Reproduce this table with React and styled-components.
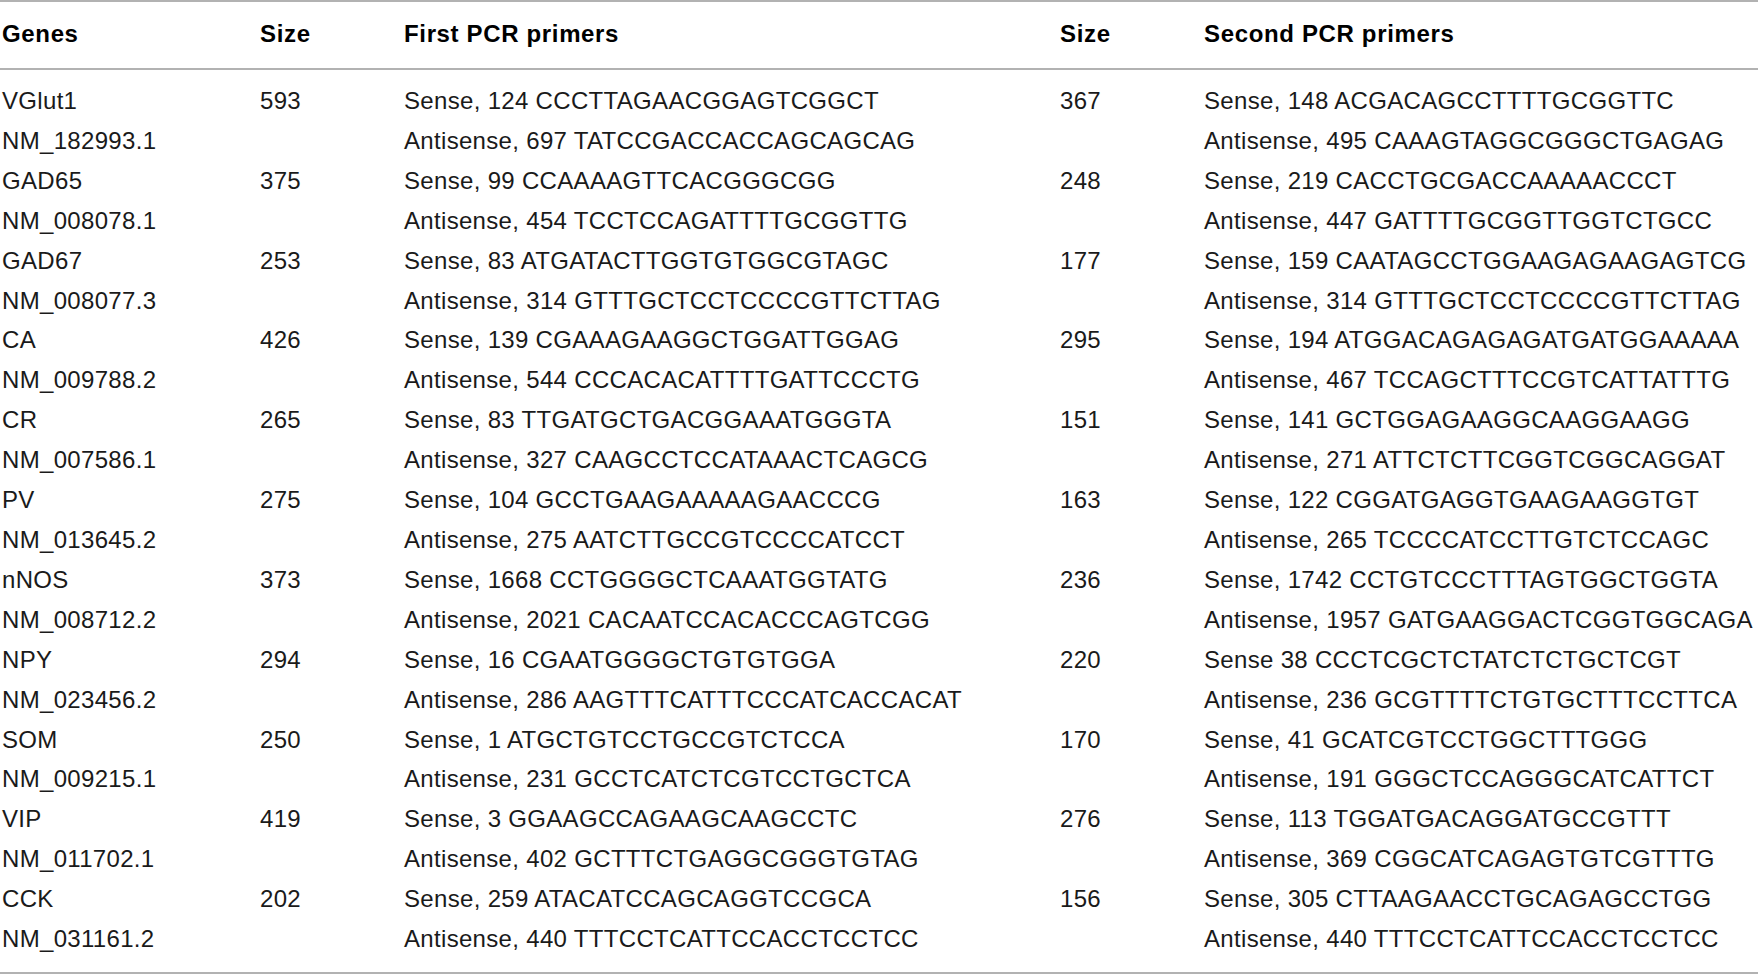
import styled, { createGlobalStyle } from "styled-components";

const GlobalStyle = createGlobalStyle`
  html, body {
    margin: 0;
    padding: 0;
    background: #ffffff;
    overflow: hidden;
  }
  body {
    font-family: "Liberation Sans", Arial, sans-serif;
  }
`;

const genes = [
  {
    name: "VGlut1", acc: "NM_182993.1", size1: "593",
    s1: "Sense, 124 CCCTTAGAACGGAGTCGGCT", a1: "Antisense, 697 TATCCGACCACCAGCAGCAG",
    size2: "367",
    s2: "Sense, 148 ACGACAGCCTTTTGCGGTTC", a2: "Antisense, 495 CAAAGTAGGCGGGCTGAGAG",
  },
  {
    name: "GAD65", acc: "NM_008078.1", size1: "375",
    s1: "Sense, 99 CCAAAAGTTCACGGGCGG", a1: "Antisense, 454 TCCTCCAGATTTTGCGGTTG",
    size2: "248",
    s2: "Sense, 219 CACCTGCGACCAAAAACCCT", a2: "Antisense, 447 GATTTTGCGGTTGGTCTGCC",
  },
  {
    name: "GAD67", acc: "NM_008077.3", size1: "253",
    s1: "Sense, 83 ATGATACTTGGTGTGGCGTAGC", a1: "Antisense, 314 GTTTGCTCCTCCCCGTTCTTAG",
    size2: "177",
    s2: "Sense, 159 CAATAGCCTGGAAGAGAAGAGTCG", a2: "Antisense, 314 GTTTGCTCCTCCCCGTTCTTAG",
  },
  {
    name: "CA", acc: "NM_009788.2", size1: "426",
    s1: "Sense, 139 CGAAAGAAGGCTGGATTGGAG", a1: "Antisense, 544 CCCACACATTTTGATTCCCTG",
    size2: "295",
    s2: "Sense, 194 ATGGACAGAGAGATGATGGAAAAA", a2: "Antisense, 467 TCCAGCTTTCCGTCATTATTTG",
  },
  {
    name: "CR", acc: "NM_007586.1", size1: "265",
    s1: "Sense, 83 TTGATGCTGACGGAAATGGGTA", a1: "Antisense, 327 CAAGCCTCCATAAACTCAGCG",
    size2: "151",
    s2: "Sense, 141 GCTGGAGAAGGCAAGGAAGG", a2: "Antisense, 271 ATTCTCTTCGGTCGGCAGGAT",
  },
  {
    name: "PV", acc: "NM_013645.2", size1: "275",
    s1: "Sense, 104 GCCTGAAGAAAAAGAACCCG", a1: "Antisense, 275 AATCTTGCCGTCCCCATCCT",
    size2: "163",
    s2: "Sense, 122 CGGATGAGGTGAAGAAGGTGT", a2: "Antisense, 265 TCCCCATCCTTGTCTCCAGC",
  },
  {
    name: "nNOS", acc: "NM_008712.2", size1: "373",
    s1: "Sense, 1668 CCTGGGGCTCAAATGGTATG", a1: "Antisense, 2021 CACAATCCACACCCAGTCGG",
    size2: "236",
    s2: "Sense, 1742 CCTGTCCCTTTAGTGGCTGGTA", a2: "Antisense, 1957 GATGAAGGACTCGGTGGCAGA",
  },
  {
    name: "NPY", acc: "NM_023456.2", size1: "294",
    s1: "Sense, 16 CGAATGGGGCTGTGTGGA", a1: "Antisense, 286 AAGTTTCATTTCCCATCACCACAT",
    size2: "220",
    s2: "Sense 38 CCCTCGCTCTATCTCTGCTCGT", a2: "Antisense, 236 GCGTTTTCTGTGCTTTCCTTCA",
  },
  {
    name: "SOM", acc: "NM_009215.1", size1: "250",
    s1: "Sense, 1 ATGCTGTCCTGCCGTCTCCA", a1: "Antisense, 231 GCCTCATCTCGTCCTGCTCA",
    size2: "170",
    s2: "Sense, 41 GCATCGTCCTGGCTTTGGG", a2: "Antisense, 191 GGGCTCCAGGGCATCATTCT",
  },
  {
    name: "VIP", acc: "NM_011702.1", size1: "419",
    s1: "Sense, 3 GGAAGCCAGAAGCAAGCCTC", a1: "Antisense, 402 GCTTTCTGAGGCGGGTGTAG",
    size2: "276",
    s2: "Sense, 113 TGGATGACAGGATGCCGTTT", a2: "Antisense, 369 CGGCATCAGAGTGTCGTTTG",
  },
  {
    name: "CCK", acc: "NM_031161.2", size1: "202",
    s1: "Sense, 259 ATACATCCAGCAGGTCCGCA", a1: "Antisense, 440 TTTCCTCATTCCACCTCCTCC",
    size2: "156",
    s2: "Sense, 305 CTTAAGAACCTGCAGAGCCTGG", a2: "Antisense, 440 TTTCCTCATTCCACCTCCTCC",
  },
];

export default function App() {
  return (
    <>
      <GlobalStyle />
      <Frame>
        <Table>
          <colgroup>
            <col style={{ width: 260 }} />
            <col style={{ width: 144 }} />
            <col style={{ width: 656 }} />
            <col style={{ width: 144 }} />
            <col />
          </colgroup>
          <thead>
            <tr>
              <HeadCell first>Genes</HeadCell>
              <HeadCell>Size</HeadCell>
              <HeadCell>First PCR primers</HeadCell>
              <HeadCell>Size</HeadCell>
              <HeadCell>Second PCR primers</HeadCell>
            </tr>
          </thead>
          <Body>
            {genes.map((g) => [
              <tr key={g.name}>
                <Cell first>{g.name}</Cell>
                <Cell>{g.size1}</Cell>
                <Cell>{g.s1}</Cell>
                <Cell>{g.size2}</Cell>
                <Cell>{g.s2}</Cell>
              </tr>,
              <tr key={g.acc}>
                <Cell first>{g.acc}</Cell>
                <Cell />
                <Cell>{g.a1}</Cell>
                <Cell />
                <Cell>{g.a2}</Cell>
              </tr>,
            ])}
          </Body>
        </Table>
      </Frame>
    </>
  );
}

const Frame = styled.div`
  width: 1758px;
  border-top: 2px solid #b2b2b2;
  border-bottom: 2px solid #b2b2b2;
  overflow: hidden;
`;

const Table = styled.table`
  width: 1758px;
  table-layout: fixed;
  border-collapse: separate;
  border-spacing: 0;
  font-family: "Liberation Sans", Arial, sans-serif;
`;

const HeadCell = styled.th`
  padding: 18px 0 21px ${(p) => (p.first ? "2px" : "0")};
  border-bottom: 2px solid #b2b2b2;
  text-align: left;
  font-size: 24px;
  line-height: 27px;
  font-weight: 700;
  letter-spacing: 0.65px;
  color: #000000;
  white-space: nowrap;
`;

const Body = styled.tbody`
  tr:first-child td {
    padding-top: 11px;
  }
  tr:last-child td {
    padding-bottom: 13px;
  }
`;

const Cell = styled.td`
  padding: 0 0 0 ${(p) => (p.first ? "2px" : "0")};
  font-size: 24px;
  line-height: 39.9px;
  letter-spacing: 0.32px;
  color: #1a1a1a;
  white-space: nowrap;
  overflow: visible;
  vertical-align: top;
`;
